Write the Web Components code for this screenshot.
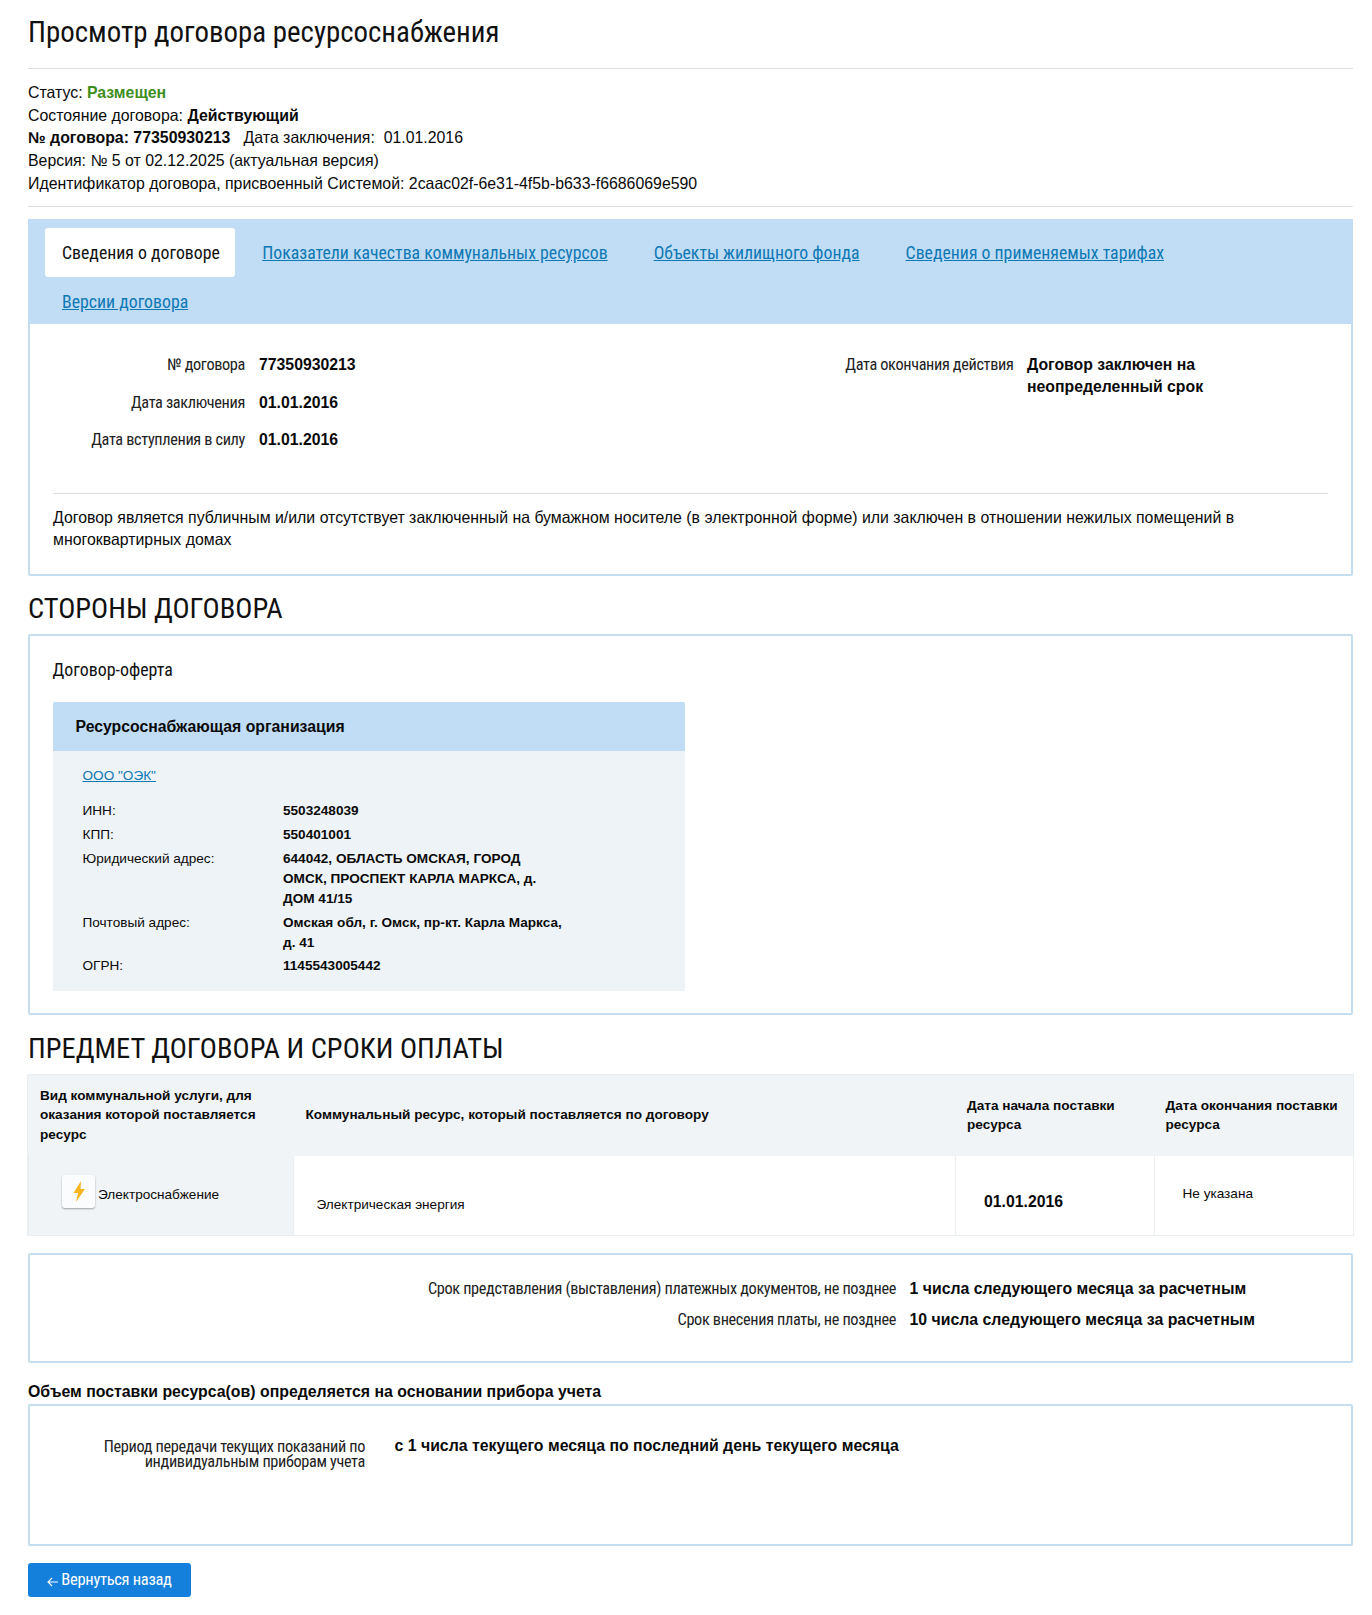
<!DOCTYPE html>
<html lang="ru">
<head>
<meta charset="utf-8">
<title>Просмотр договора ресурсоснабжения</title>
<style>
  html, body { margin: 0; background: #fff; }
  body { font: 15.86px/22.7px "Liberation Sans", Arial, sans-serif; color: #0a0a0a; }
  b { font-weight: 700; }
  a { color: #0f78b4; text-decoration: underline; }
  .ok { color: #3e8e1c; font-weight: 700; }
</style>
</head>
<body>
<contract-page>
  <page-title>Просмотр договора ресурсоснабжения</page-title>
  <meta-block>
    <div>Статус: <span class="ok">Размещен</span></div>
    <div>Состояние договора: <b>Действующий</b></div>
    <div><b>№ договора: 77350930213</b> &nbsp; Дата заключения: &nbsp;01.01.2016</div>
    <div>Версия: № 5 от 02.12.2025 (актуальная версия)</div>
    <div>Идентификатор договора, присвоенный Системой: 2caac02f-6e31-4f5b-b633-f6686069e590</div>
  </meta-block>

  <info-panel style="--pad:0 0 21.6px">
    <tab-bar>
      <tab-item active>Сведения о договоре</tab-item>
      <tab-item>Показатели качества коммунальных ресурсов</tab-item>
      <tab-item>Объекты жилищного фонда</tab-item>
      <tab-item>Сведения о применяемых тарифах</tab-item>
      <tab-item>Версии договора</tab-item>
    </tab-bar>
    <panel-columns>
      <field-list style="--lw:192.5px;--gap:14px;--vw:400px;width:661px">
        <field-row label="№ договора">77350930213</field-row>
        <field-row label="Дата заключения">01.01.2016</field-row>
        <field-row label="Дата вступления в силу">01.01.2016</field-row>
      </field-list>
      <field-list style="--lw:300px;--gap:13.5px;--vw:200px">
        <field-row label="Дата окончания действия">Договор заключен на неопределенный срок</field-row>
      </field-list>
    </panel-columns>
    <panel-note>Договор является публичным и/или отсутствует заключенный на бумажном носителе (в электронной форме) или заключен в отношении нежилых помещений в многоквартирных домах</panel-note>
  </info-panel>

  <section-title>СТОРОНЫ ДОГОВОРА</section-title>
  <info-panel style="--pad:22px 22.5px 22px">
    <sub-title>Договор-оферта</sub-title>
    <org-card heading="Ресурсоснабжающая организация">
      <a slot="name" href="#">ООО "ОЭК"</a>
      <org-row label="ИНН:">5503248039</org-row>
      <org-row label="КПП:">550401001</org-row>
      <org-row label="Юридический адрес:">644042, ОБЛАСТЬ ОМСКАЯ, ГОРОД ОМСК, ПРОСПЕКТ КАРЛА МАРКСА, д. ДОМ 41/15</org-row>
      <org-row label="Почтовый адрес:">Омская обл, г. Омск, пр-кт. Карла Маркса, д. 41</org-row>
      <org-row label="ОГРН:">1145543005442</org-row>
    </org-card>
  </info-panel>

  <section-title>ПРЕДМЕТ ДОГОВОРА И СРОКИ ОПЛАТЫ</section-title>
  <service-table>
    <table-cell head>Вид коммунальной услуги, для оказания которой поставляется ресурс</table-cell>
    <table-cell head style="padding-left:13px">Коммунальный ресурс, который поставляется по договору</table-cell>
    <table-cell head>Дата начала поставки ресурса</table-cell>
    <table-cell head>Дата окончания поставки ресурса</table-cell>
    <table-cell tint><service-badge>Электроснабжение</service-badge></table-cell>
    <table-cell style="--x:23px;--y:10px;">Электрическая энергия</table-cell>
    <table-cell style="--x:28px;--y:7px;font-size:15.8px;font-weight:700;">01.01.2016</table-cell>
    <table-cell style="--x:28px;--y:-1px;">Не указана</table-cell>
  </service-table>

  <info-panel style="--pad:19px 0 25.5px;margin-top:18.5px">
    <term-row>
      <span slot="label">Срок представления (выставления) платежных документов, не позднее</span>
      1 числа следующего месяца за расчетным
    </term-row>
    <term-row>
      <span slot="label">Срок внесения платы, не позднее</span>
      10 числа следующего месяца за расчетным
    </term-row>
  </info-panel>

  <plain-caption>Объем поставки ресурса(ов) определяется на основании прибора учета</plain-caption>
  <info-panel style="--pad:33px 0 0;height:142px;margin-top:1.5px">
    <period-row>
      <span slot="label">Период передачи текущих показаний по индивидуальным приборам учета</span>
      с 1 числа текущего месяца по последний день текущего месяца
    </period-row>
  </info-panel>

  <back-button>Вернуться назад</back-button>
</contract-page>

<script>
const NARROW = '"Liberation Sans Narrow", "Roboto Condensed", "Liberation Sans", sans-serif';
const LABEL = `font-family:${NARROW};font-weight:400;font-size:16.3px;letter-spacing:-.35px;color:#222`;

function define(name, css, html, extra) {
  class El extends HTMLElement {
    constructor() {
      super();
      this.attachShadow({ mode: 'open' });
      this.shadowRoot.innerHTML = `<style>${css}</style>${html}`;
    }
    connectedCallback() {
      if (extra) extra(this);
    }
  }
  customElements.define(name, El);
}

function setLabel(el) {
  el.shadowRoot.querySelector('.label').textContent = el.getAttribute('label');
}

define('contract-page', `:host{display:block;width:1325px;margin:0 19px 0 28px;padding-bottom:18px}`, `<slot></slot>`);

define('page-title', `:host{display:block;padding:14px 0 18px;border-bottom:1px solid #ddd;
  font:400 28.9px/36px ${NARROW};color:#111}`, `<slot></slot>`);

define('meta-block', `:host{display:block;padding:13px 0 10px;margin-bottom:12px;border-bottom:1px solid #ddd}`, `<slot></slot>`);

define('info-panel', `:host{display:block;box-sizing:border-box;border:2px solid #c4deef;border-radius:2px;background:#fff}
  .in{padding:var(--pad,0)}`, `<div class="in"><slot></slot></div>`);

define('tab-bar', `:host{display:flex;flex-wrap:wrap;align-content:flex-start;box-sizing:border-box;height:105.5px;
  margin:-2px -2px 0;padding:9.5px 17px 0;background:#c0ddf5}`, `<slot></slot>`);

define('tab-item', `:host{display:block;box-sizing:border-box;height:49px;padding:0 17px;margin-right:12px;
  font:400 17.8px/50.5px ${NARROW};color:#0f78b4;text-decoration:underline}
  :host([active]){width:189.5px;padding:0 0 0 17px;margin-right:10.7px;background:#fff;color:#111;text-decoration:none;border-radius:3px}`, `<slot></slot>`);

define('panel-columns', `:host{display:flex;padding:23.25px 22.5px 33.5px}`, `<slot></slot>`);

define('field-list', `:host{display:block}`, `<slot></slot>`);

define('field-row', `:host{display:grid;grid-template-columns:var(--lw) var(--vw);column-gap:var(--gap);min-height:37.5px;
  align-items:start;padding-top:7px;box-sizing:border-box}
  .label{text-align:right;${LABEL};line-height:22px}
  .val{font-weight:700;font-size:15.8px;line-height:22px}`,
  `<div class="label"></div><div class="val"><slot></slot></div>`, setLabel);

define('panel-note', `:host{display:block;margin:0 23px;padding-top:12.5px;border-top:1px solid #ddd}`, `<slot></slot>`);

define('section-title', `:host{display:block;margin:16.5px 0 8px;font:400 28.5px/34px ${NARROW};color:#111}`, `<slot></slot>`);

define('sub-title', `:host{display:block;margin-bottom:19.5px;font:400 17.9px/24px ${NARROW};color:#111}`, `<slot></slot>`);

define('org-card', `:host{display:block;width:632.5px;background:#eef3f7;border-radius:2px 2px 0 0}
  .head{height:49.5px;padding-left:23px;background:#c0ddf5;font-weight:700;font-size:15.8px;line-height:49.5px;border-radius:2px 2px 0 0}
  .body{padding:15px 30px 13px;font-size:13.6px;line-height:20px}
  .name{margin-bottom:13px}`,
  `<div class="head"></div><div class="body"><div class="name"><slot name="name"></slot></div><slot></slot></div>`,
  el => { el.shadowRoot.querySelector('.head').textContent = el.getAttribute('heading'); });

define('org-row', `:host{display:grid;grid-template-columns:200.5px 281px;padding:1.9px 0}
  .val{font-weight:700}`, `<div class="label"></div><div class="val"><slot></slot></div>`, setLabel);

define('service-table', `:host{display:grid;grid-template-columns:264.5px 662.5px 198.5px 199.5px;grid-template-rows:81px 79px;margin-top:9px;
  box-shadow:0 0 0 1px #e9eef1;font-size:13.6px;line-height:19.6px}`, `<slot></slot>`);

define('table-cell', `:host{display:flex;align-items:center;box-sizing:border-box;padding:0 12px;background:#fff;
  border-left:1px solid #e9eef1}
  :host([head]){background:#f0f4f7;font-weight:700;border:0}
  :host([tint]){background:#f0f4f7}
  :host(:not([head]):not([tint])){padding-left:var(--x,12px)}
  .t{transform:translateY(var(--y,0))}`, `<div class="t"><slot></slot></div>`);

define('service-badge', `:host{display:flex;align-items:center;gap:3px;margin-left:21px}
  .ico{width:33px;height:33px;margin-bottom:8px;border-radius:3px;background:#fbfcfd;box-shadow:0 1px 2px rgba(0,0,0,.35);display:flex;align-items:center;justify-content:center}`,
  `<span class="ico"><svg width="14" height="21" viewBox="0 0 14 21"><path d="M9 0 1.5 12H6L4 21l9-13H8.5z" fill="#f7b520"/></svg></span><slot></slot>`);

define('term-row', `:host{display:grid;grid-template-columns:866px 1fr;column-gap:13.5px;height:30.5px;
  font-weight:700;font-size:15.85px;line-height:30.5px}
  ::slotted([slot=label]){display:block;text-align:right;${LABEL};line-height:30.5px}`,
  `<slot name="label"></slot><div><slot></slot></div>`);

define('plain-caption', `:host{display:block;margin-top:19.5px;font-weight:700;font-size:15.85px;line-height:20px}`, `<slot></slot>`);

define('period-row', `:host{display:grid;grid-template-columns:335px 1fr;column-gap:29.5px;
  font-weight:700;font-size:15.85px;line-height:15px}
  ::slotted([slot=label]){display:block;text-align:right;${LABEL};line-height:15.5px}
  div{margin-top:-1px}`,
  `<slot name="label"></slot><div><slot></slot></div>`);

define('back-button', `:host{display:flex;align-items:center;justify-content:center;gap:3px;box-sizing:border-box;width:163px;height:34px;
  margin-top:17px;border-radius:3px;background:#1580dc;color:#fff;font:400 16.5px/34px ${NARROW};letter-spacing:-.3px}
  svg{margin-top:5px}`,
  `<svg width="11" height="10" viewBox="0 0 11 10"><path d="M11 5H1M5 1 1 5l4 4" fill="none" stroke="#fff" stroke-width="1.1"/></svg><slot></slot>`);
</script>
</body>
</html>
